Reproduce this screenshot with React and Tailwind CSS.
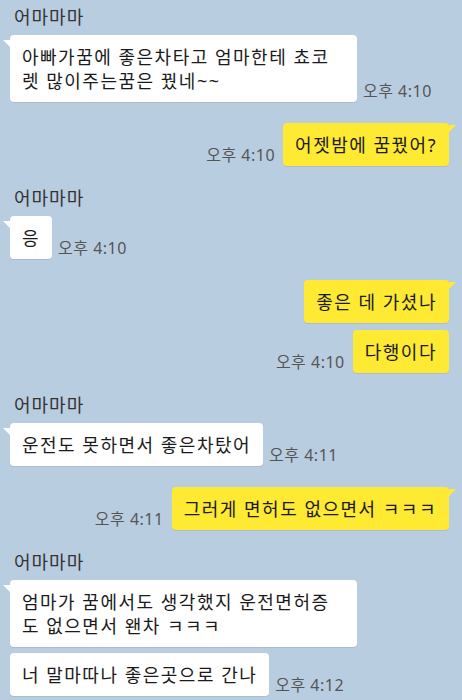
import React from "react";

const font = { fontFamily: '"Noto Sans", "Noto Sans CJK KR", sans-serif' };

function Name({ children }) {
  return <div className="pl-[14px] text-[18px] leading-[22px] tracking-[1px] text-[#333] mb-[7px]">{children}</div>;
}

function Time({ children }) {
  return <span className="text-[16px] leading-[18px] tracking-[0.5px] text-[#555] whitespace-nowrap mb-[2px]">{children}</span>;
}

function Left({ children, time, tail, wide }) {
  return (
    <div className="flex items-end pl-[10px] gap-[6px]">
      <div className={wide
        ? "relative w-[347px] bg-white rounded-[4px] px-[12px] pt-[10px] pb-[9px] text-[18px] leading-[24px] tracking-[1.5px] text-[#1a1a1a] shadow-[0_1px_0_rgba(0,0,0,0.08)]"
        : "relative bg-white rounded-[4px] px-[12px] pt-[10px] pb-[9px] text-[18px] leading-[24px] tracking-[1.5px] text-[#1a1a1a] shadow-[0_1px_0_rgba(0,0,0,0.08)]"}>
        {tail && (
          <span className="absolute left-[-7px] top-[5px] w-0 h-0 border-t-[7px] border-t-white border-l-[7px] border-l-transparent" />
        )}
        {children}
      </div>
      {time && <Time>{time}</Time>}
    </div>
  );
}

function Right({ children, time, tail }) {
  return (
    <div className="flex items-end justify-end pr-[13px] gap-[8px]">
      {time && <Time>{time}</Time>}
      <div className="relative bg-[#fee933] rounded-[4px] px-[12px] pt-[10px] pb-[9px] text-[18px] leading-[24px] tracking-[1.5px] text-[#1a1a1a] shadow-[0_1px_0_rgba(0,0,0,0.08)]">
        {tail && (
          <span className="absolute right-[-7px] top-[2px] w-0 h-0 border-t-[7px] border-t-[#fee933] border-r-[7px] border-r-transparent" />
        )}
        {children}
      </div>
    </div>
  );
}

export default function App() {
  return (
    <div className="w-[462px] h-[700px] bg-[#b9cde0] overflow-hidden pt-[6px]" style={font}>
      <Name>어마마마</Name>
      <Left tail wide time="오후 4:10">
        아빠가꿈에 좋은차타고 엄마한테 쵸코<br />렛 많이주는꿈은 꿨네~~
      </Left>
      <div className="h-[21px]" />
      <Right tail time="오후 4:10">어젯밤에 꿈꿨어?</Right>
      <div className="h-[21px]" />
      <Name>어마마마</Name>
      <Left tail time="오후 4:10">응</Left>
      <div className="h-[21px]" />
      <Right tail>좋은 데 가셨나</Right>
      <div className="h-[7px]" />
      <Right time="오후 4:10">다행이다</Right>
      <div className="h-[21px]" />
      <Name>어마마마</Name>
      <Left tail time="오후 4:11">운전도 못하면서 좋은차탔어</Left>
      <div className="h-[21px]" />
      <Right tail time="오후 4:11">그러게 면허도 없으면서 ㅋㅋㅋ</Right>
      <div className="h-[21px]" />
      <Name>어마마마</Name>
      <Left tail wide>
        엄마가 꿈에서도 생각했지 운전면허증<br />도 없으면서 왠차 ㅋㅋㅋ
      </Left>
      <div className="h-[6px]" />
      <Left time="오후 4:12">너 말마따나 좋은곳으로 간나</Left>
    </div>
  );
}
